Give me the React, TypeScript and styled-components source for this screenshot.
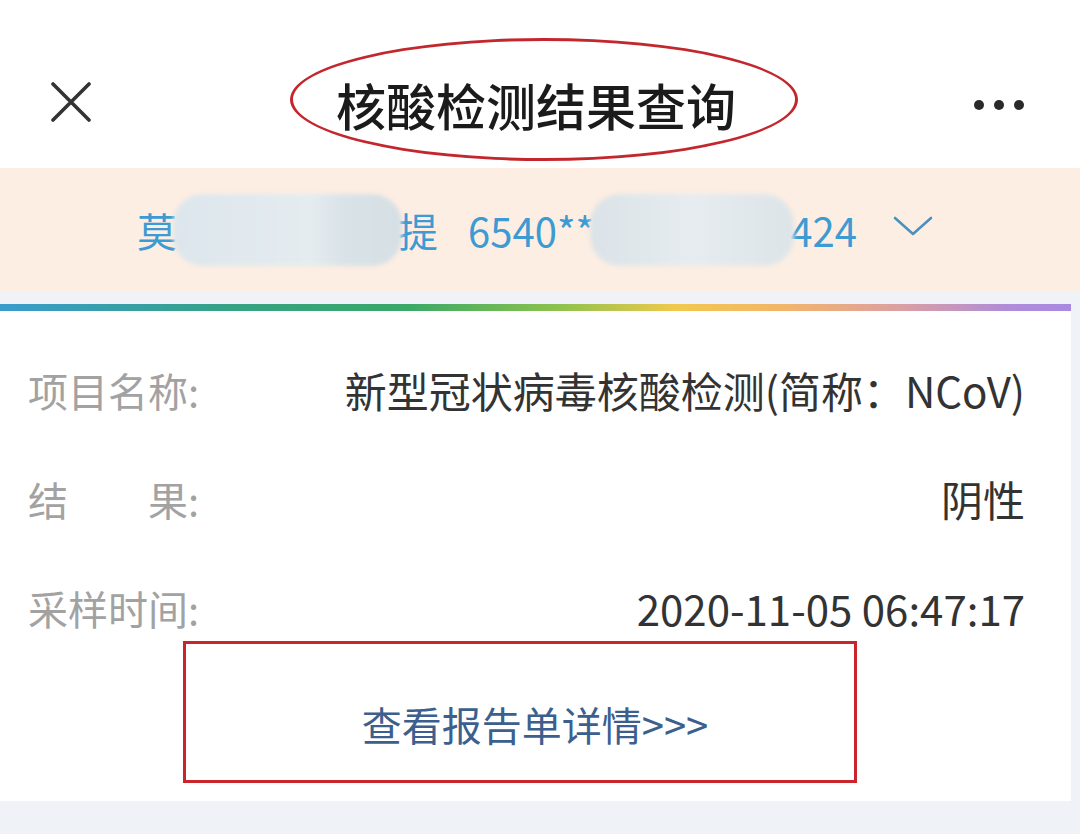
import React from 'react';
import styled, { createGlobalStyle } from 'styled-components';

const GlobalStyle = createGlobalStyle`
  html, body {
    margin: 0;
    padding: 0;
    background: #eff3f8;
  }
  body {
    width: 1080px;
    height: 834px;
    overflow: hidden;
    font-family: "Noto Sans CJK SC", "Noto Sans", sans-serif;
  }
`;

const Page = styled.div`
  width: 1080px;
  height: 834px;
  background: #eff3f8;
`;

// Barra superior
const Header = styled.header`
  box-sizing: border-box;
  height: 168px;
  padding-top: 30px;
  background: #ffffff;
  display: grid;
  grid-template-columns: 1fr auto 1fr;
  align-items: center;
`;

const CloseButton = styled.button`
  justify-self: start;
  margin-left: 48px;
  margin-top: 6px;
  width: 46px;
  height: 46px;
  padding: 0;
  border: none;
  background: transparent;
  display: flex;
  align-items: center;
  justify-content: center;
`;

const TitleMark = styled.div`
  box-sizing: border-box;
  width: 508px;
  height: 123px;
  border: 3px solid #c3272d;
  border-radius: 50%;
  display: flex;
  align-items: center;
  justify-content: center;
  margin-left: 8px;
`;

const Title = styled.h1`
  margin: 10px 16px 0 0;
  font-size: 50px;
  font-weight: 500;
  color: #1b1b1b;
  letter-spacing: 0;
`;

const MoreButton = styled.div`
  justify-self: end;
  margin-right: 56px;
  margin-top: 12px;
  display: flex;
  gap: 10px;
`;

const Dot = styled.span`
  width: 10px;
  height: 10px;
  border-radius: 50%;
  background: #2a2a2a;
`;

// Faixa do usuário
const UserBanner = styled.div`
  height: 123px;
  background: #fdeee3;
  display: flex;
  align-items: center;
  justify-content: center;
  color: #3d9ad2;
  font-size: 40px;
  padding-right: 10px;
`;

const BannerText = styled.span<{ gap?: number }>`
  margin-left: ${p => p.gap ?? 0}px;
  white-space: pre;
  line-height: 1;
`;

const Mask = styled.span<{ w: number; tint: string }>`
  display: inline-block;
  width: ${p => p.w}px;
  height: 72px;
  margin: 0 -4px;
  border-radius: 30px;
  background: ${p => p.tint};
  filter: blur(2px);
  position: relative;
  z-index: 1;
`;

const Chevron = styled.svg`
  margin-left: 36px;
  margin-top: -8px;
`;

// Cartão com resultado
const Card = styled.section`
  margin-top: 13px;
  width: 1071px;
  background: #ffffff;
  border-top: 7px solid transparent;
  border-image: linear-gradient(90deg, #3a9ccc 0%, #35a283 22%, #3aa867 38%, #8cc24c 52%, #f0c94c 63%, #f3b56a 73%, #dba0a2 84%, #b08cd8 94%, #a98ae2 100%) 1;
  padding: 24px 0 18px;
`;

const Row = styled.div`
  height: 109px;
  display: flex;
  align-items: center;
  justify-content: space-between;
  padding: 0 46px 0 28px;
  line-height: 1;
`;

const Label = styled.span`
  color: #a2a2a2;
  font-size: 40px;
  white-space: pre;
`;

const Value = styled.span`
  color: #333333;
  font-size: 42px;
`;

const ReportLink = styled.a`
  display: flex;
  align-items: center;
  justify-content: center;
  box-sizing: border-box;
  width: 674px;
  height: 142px;
  margin: -21px 0 0 183px;
  padding: 24px 0 0 30px;
  border: 3px solid #c8262b;
  color: #3d5f8e;
  font-size: 40px;
  text-decoration: none;
`;

const rows = [
  { label: '项目名称:', value: '新型冠状病毒核酸检测(简称：NCoV)' },
  { label: '结　　果:', value: '阴性' },
  { label: '采样时间:', value: '2020-11-05 06:47:17' },
];

export default function App() {
  return (
    <Page>
      <GlobalStyle />
      <Header>
        <CloseButton aria-label="关闭">
          <svg width="42" height="40" viewBox="0 0 42 40">
            <path d="M3 2 L39 38 M39 2 L3 38" stroke="#333" strokeWidth="3.6" strokeLinecap="round" />
          </svg>
        </CloseButton>
        <TitleMark>
          <Title>核酸检测结果查询</Title>
        </TitleMark>
        <MoreButton>
          <Dot />
          <Dot />
          <Dot />
        </MoreButton>
      </Header>

      <UserBanner>
        <BannerText>莫</BannerText>
        <Mask w={229} tint="linear-gradient(90deg, #dde6ec 0%, #e4ecf0 60%, #d9e2e7 75%, #d6dfe4 100%)" />
        <BannerText>提</BannerText>
        <BannerText gap={30}>6540**</BannerText>
        <Mask w={204} tint="linear-gradient(90deg, #dbe3e8 0%, #e6ecef 50%, #dde4e8 100%)" />
        <BannerText>424</BannerText>
        <Chevron width="40" height="22" viewBox="0 0 40 22">
          <path d="M2 3 L20 19 L38 3" fill="none" stroke="#4a92bd" strokeWidth="2.6" strokeLinecap="round" strokeLinejoin="round" />
        </Chevron>
      </UserBanner>

      <Card>
        {rows.map(r => (
          <Row key={r.label}>
            <Label>{r.label}</Label>
            <Value>{r.value}</Value>
          </Row>
        ))}
        <ReportLink href="#">查看报告单详情&gt;&gt;&gt;</ReportLink>
      </Card>
    </Page>
  );
}
